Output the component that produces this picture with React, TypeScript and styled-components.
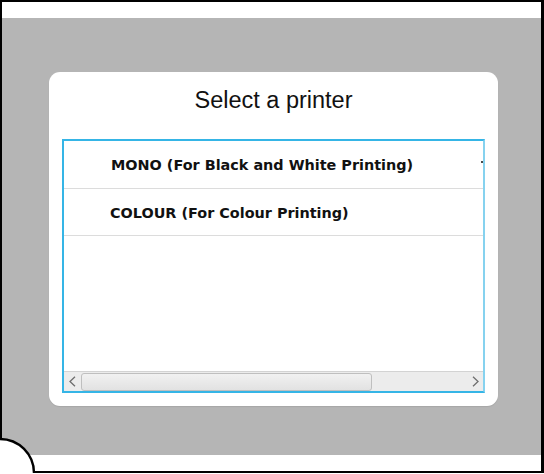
import React from "react";
import styled, { createGlobalStyle } from "styled-components";

const Global = createGlobalStyle`
  html, body { margin: 0; padding: 0; background: #ffffff; }
  body { font-family: "Liberation Sans", Arial, sans-serif; }
`;

const Frame = styled.div`
  position: relative;
  width: 544px;
  height: 473px;
  box-sizing: border-box;
  border-style: solid;
  border-color: #000;
  border-width: 2px 3px 2px 2px;
  background: #fff;
  display: flex;
  flex-direction: column;
`;

const TopStrip = styled.div`
  height: 16px;
  flex: none;
`;

const Stage = styled.div`
  height: 437px;
  flex: none;
  box-sizing: border-box;
  background: #b5b5b5;
  padding: 54px 43px 0 47px;
`;

const Dialog = styled.div`
  width: 449px;
  height: 334px;
  box-sizing: border-box;
  background: #fff;
  border-radius: 11px;
  box-shadow: 0 1px 1px rgba(0, 0, 0, 0.08);
  padding: 0 13px 13px;
  display: flex;
  flex-direction: column;
`;

const Title = styled.h1`
  margin: 0 0 25px;
  padding-top: 14px;
  font-family: "Liberation Sans", Arial, sans-serif;
  font-weight: 400;
  font-size: 23.5px;
  line-height: 28px;
  color: #111;
  text-align: center;
`;

const ListBox = styled.div`
  flex: 1;
  min-height: 0;
  border: 2px solid #35b5e6;
  border-right-color: #86d2ef;
  display: flex;
  flex-direction: column;
`;

const Viewport = styled.div`
  flex: 1;
  min-height: 0;
  overflow: hidden;
`;

const Row = styled.div<{ $indent: number }>`
  height: 47.5px;
  box-sizing: border-box;
  border-bottom: 1px solid #dcdcdc;
  display: flex;
  align-items: center;
  justify-content: space-between;
  padding-top: 2px;
  padding-left: ${(p) => p.$indent}px;
`;

const RowLabel = styled.span`
  font-family: "DejaVu Sans", "Open Sans", sans-serif;
  font-weight: 700;
  font-size: 14.4px;
  color: #111;
  white-space: nowrap;
`;

const Mark = styled.span`
  width: 2px;
  height: 2px;
  margin-bottom: 6px;
  background: #4a4a4a;
`;

const ScrollBar = styled.div`
  height: 20px;
  flex: none;
  box-sizing: border-box;
  border-top: 1px solid #d3d3d3;
  background: #ececec;
  display: flex;
  align-items: stretch;
`;

const ArrowButton = styled.div`
  width: 16px;
  flex: none;
  display: flex;
  align-items: center;
  justify-content: center;
`;

const Track = styled.div`
  flex: 1;
  display: flex;
  padding: 1px 0 0 1px;
`;

const Thumb = styled.div`
  width: 291px;
  box-sizing: border-box;
  border: 1px solid #bfbfbf;
  border-radius: 3px;
  background: linear-gradient(#f1f1f1, #e2e2e2);
`;

const Notch = styled.svg`
  position: absolute;
  left: -2px;
  bottom: -2px;
  display: block;
`;

const Chevron = ({ dir }: { dir: "left" | "right" }) => (
  <svg width="7" height="11" viewBox="0 0 7 11">
    <polyline
      points={dir === "left" ? "6,0.8 1,5.5 6,10.2" : "1,0.8 6,5.5 1,10.2"}
      fill="none"
      stroke="#6e6e6e"
      strokeWidth="1.3"
    />
  </svg>
);

const printers = [
  { label: "MONO (For Black and White Printing)", indent: 47, mark: true },
  { label: "COLOUR (For Colour Printing)", indent: 46, mark: false },
];

export default function App() {
  return (
    <>
      <Global />
      <Frame>
        <TopStrip />
        <Stage>
          <Dialog>
            <Title>Select a printer</Title>
            <ListBox>
              <Viewport>
                {printers.map((p) => (
                  <Row key={p.label} $indent={p.indent}>
                    <RowLabel>{p.label}</RowLabel>
                    {p.mark && <Mark />}
                  </Row>
                ))}
              </Viewport>
              <ScrollBar>
                <ArrowButton>
                  <Chevron dir="left" />
                </ArrowButton>
                <Track>
                  <Thumb />
                </Track>
                <ArrowButton>
                  <Chevron dir="right" />
                </ArrowButton>
              </ScrollBar>
            </ListBox>
          </Dialog>
        </Stage>
        <Notch width="37" height="37" viewBox="0 0 37 37">
          <path d="M0 37 L0 3 A34 34 0 0 1 34 37 Z" fill="#fff" />
          <path d="M0 3 A34 34 0 0 1 34 37" fill="none" stroke="#000" strokeWidth="2.4" />
        </Notch>
      </Frame>
    </>
  );
}
